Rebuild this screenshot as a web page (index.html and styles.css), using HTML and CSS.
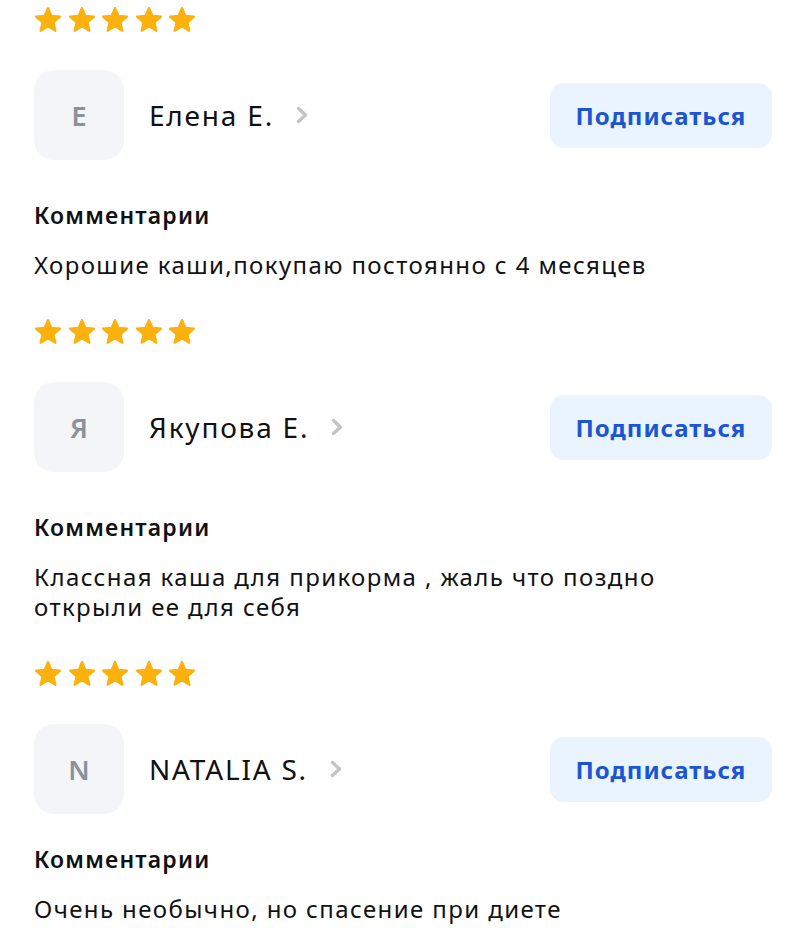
FILE: index.html
```html
<!DOCTYPE html>
<html lang="ru">
<head>
    <meta charset="UTF-8">
    <meta name="viewport" content="width=device-width, initial-scale=1.0">
    <title>Отзывы</title>
    <link rel="stylesheet" href="styles.css">
</head>
<body>

<svg width="0" height="0" style="position:absolute">
    <defs>
        <path id="star" d="M12 17.27L18.18 21l-1.64-7.03L22 9.24l-7.19-.61L12 2 9.19 8.63 2 9.24l5.46 4.73L5.82 21z"/>
    </defs>
</svg>

<div class="reviews">

    <div class="review">
        <div class="stars">
            <svg viewBox="1.2 1.2 21.6 20.8"><use href="#star"/></svg>
            <svg viewBox="1.2 1.2 21.6 20.8"><use href="#star"/></svg>
            <svg viewBox="1.2 1.2 21.6 20.8"><use href="#star"/></svg>
            <svg viewBox="1.2 1.2 21.6 20.8"><use href="#star"/></svg>
            <svg viewBox="1.2 1.2 21.6 20.8"><use href="#star"/></svg>
        </div>
        <div class="author">
            <div class="avatar">Е</div>
            <span class="name">Елена Е.</span>
            <svg class="chevron" viewBox="0 0 12 18"><polyline points="2.5,2.5 9.5,9 2.5,15.5"/></svg>
            <button class="subscribe">Подписаться</button>
        </div>
        <div class="label">Комментарии</div>
        <p class="text">Хорошие каши,покупаю постоянно с 4 месяцев</p>
    </div>

    <div class="review">
        <div class="stars">
            <svg viewBox="1.2 1.2 21.6 20.8"><use href="#star"/></svg>
            <svg viewBox="1.2 1.2 21.6 20.8"><use href="#star"/></svg>
            <svg viewBox="1.2 1.2 21.6 20.8"><use href="#star"/></svg>
            <svg viewBox="1.2 1.2 21.6 20.8"><use href="#star"/></svg>
            <svg viewBox="1.2 1.2 21.6 20.8"><use href="#star"/></svg>
        </div>
        <div class="author">
            <div class="avatar">Я</div>
            <span class="name">Якупова Е.</span>
            <svg class="chevron" viewBox="0 0 12 18"><polyline points="2.5,2.5 9.5,9 2.5,15.5"/></svg>
            <button class="subscribe">Подписаться</button>
        </div>
        <div class="label">Комментарии</div>
        <p class="text">Классная каша для прикорма , жаль что поздно<br>открыли ее для себя</p>
    </div>

    <div class="review">
        <div class="stars">
            <svg viewBox="1.2 1.2 21.6 20.8"><use href="#star"/></svg>
            <svg viewBox="1.2 1.2 21.6 20.8"><use href="#star"/></svg>
            <svg viewBox="1.2 1.2 21.6 20.8"><use href="#star"/></svg>
            <svg viewBox="1.2 1.2 21.6 20.8"><use href="#star"/></svg>
            <svg viewBox="1.2 1.2 21.6 20.8"><use href="#star"/></svg>
        </div>
        <div class="author">
            <div class="avatar">N</div>
            <span class="name">NATALIA S.</span>
            <svg class="chevron" viewBox="0 0 12 18"><polyline points="2.5,2.5 9.5,9 2.5,15.5"/></svg>
            <button class="subscribe">Подписаться</button>
        </div>
        <div class="label">Комментарии</div>
        <p class="text">Очень необычно, но спасение при диете</p>
    </div>

</div>

</body>
</html>
```

FILE: styles.css
```css
body {
    margin: 0;
    background: #fff;
    font-family: "Noto Sans", "Open Sans", sans-serif;
    color: #111;
}

.reviews {
    padding: 7px 32px 0 34px;
}

.review {
    margin-bottom: 39px;
}

.stars {
    display: flex;
    gap: 7.5px;
    height: 25px;
    padding-left: 1px;
}

.stars svg {
    width: 26px;
    height: 25px;
    fill: #fcb10d;
    stroke: #fcb10d;
    stroke-width: 1.8;
    stroke-linejoin: round;
}

.author {
    display: flex;
    align-items: center;
    margin-top: 38px;
}

.avatar {
    width: 90px;
    height: 90px;
    border-radius: 20px;
    background-color: #f3f5f9;
    color: #8c919a;
    font-size: 27px;
    font-weight: 600;
    display: flex;
    align-items: center;
    justify-content: center;
}

.name {
    margin-left: 25px;
    font-size: 28px;
    letter-spacing: 1.8px;
    color: #111;
}

.chevron {
    width: 12px;
    height: 18px;
    margin-left: 22px;
    fill: none;
    stroke: #c4c4c6;
    stroke-width: 3.4;
    stroke-linecap: round;
    stroke-linejoin: round;
}

.subscribe {
    margin-left: auto;
    width: 222px;
    height: 65px;
    border: none;
    border-radius: 14px;
    background-color: #eaf4fe;
    color: #1b55d4;
    font-family: inherit;
    font-size: 24px;
    font-weight: 700;
    letter-spacing: 1px;
    cursor: pointer;
}

.label {
    margin-top: 40px;
    font-size: 23px;
    font-weight: 600;
    letter-spacing: 1.2px;
    line-height: 30px;
}

.review:last-child .label {
    margin-top: 30px;
}

.text {
    margin: 20px 0 0 0;
    font-size: 24px;
    letter-spacing: 1.4px;
    line-height: 30px;
}
```
